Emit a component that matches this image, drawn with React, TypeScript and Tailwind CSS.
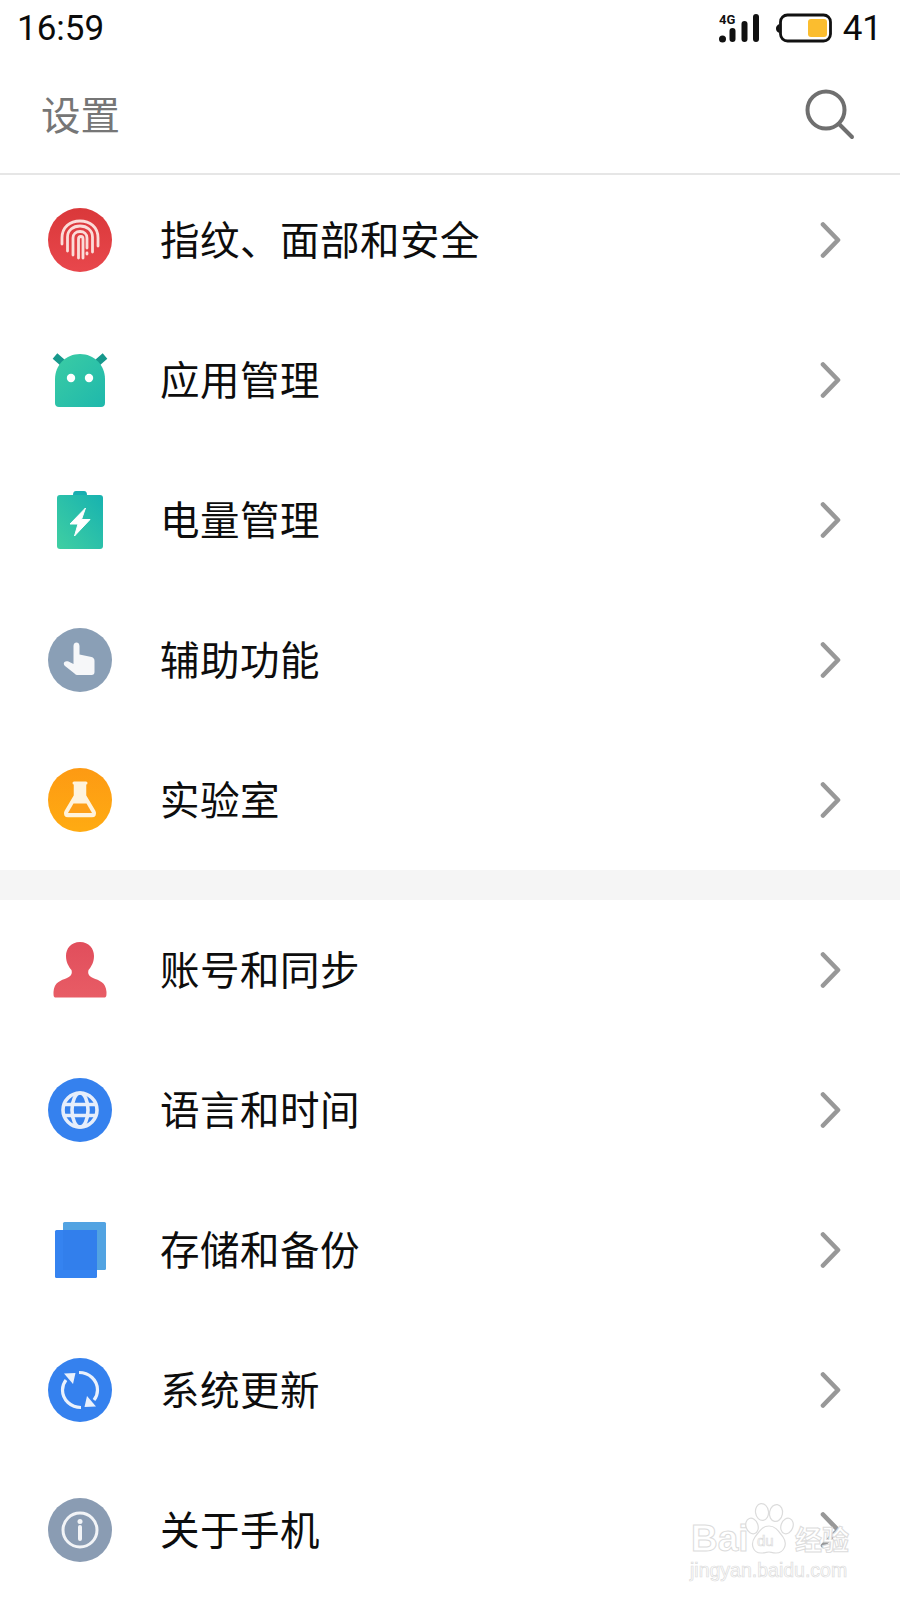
function Chevron() {
  return (
    <svg width="22" height="36" viewBox="0 0 22 36" fill="none" className="shrink-0">
      <path d="M3 2.500 18 18 3 33.500" stroke="#989898" strokeWidth="4.600" strokeLinecap="round" strokeLinejoin="round" />
    </svg>
  );
}

function FingerprintIcon() {
  return (
    <svg width="64" height="64" viewBox="0 0 64 64" fill="none">
      <defs>
        <linearGradient id="finger" x1="0" y1="0" x2="0" y2="1">
          <stop offset="0" stopColor="#da383a" />
          <stop offset="1" stopColor="#e8474c" />
        </linearGradient>
      </defs>
      <circle cx="32" cy="32" r="32" fill="url(#finger)" />
      <g stroke="#fbdcd8" strokeWidth="2.800" strokeLinecap="round">
        <path d="M14 36V30C14 19 22 13 32 13C42 13 50 19 50 30V38" />
        <path d="M19.500 43V29C19.500 22.500 25 18 32 18C39 18 44.500 22.500 44.500 29V44" />
        <path d="M25 47V30C25 26 28 23.500 32 23.500C36 23.500 39 26 39 30V40" />
        <path d="M30.500 50V31C30.500 29 32 28.500 33 28.500C34 28.500 35 29.500 35 31V50" />
        <path d="M39 45V46" />
      </g>
    </svg>
  );
}

function RobotIcon() {
  return (
    <svg width="64" height="64" viewBox="0 0 64 64" fill="none">
      <defs>
        <linearGradient id="robot" x1="0" y1="0" x2="1" y2="1">
          <stop offset="0" stopColor="#3bcca4" />
          <stop offset="1" stopColor="#1fb8ac" />
        </linearGradient>
      </defs>
      <path d="M7 8 15 15M57 8 49 15" stroke="#16988c" strokeWidth="7" />
      <path d="M7 31C7 17 18 6 32 6C46 6 57 17 57 31V55C57 57.500 55.500 59 53 59H11C8.500 59 7 57.500 7 55Z" fill="url(#robot)" />
      <circle cx="23" cy="30" r="4.200" fill="#fff" />
      <circle cx="41" cy="30" r="4.200" fill="#fff" />
    </svg>
  );
}

function BatteryIcon() {
  return (
    <svg width="64" height="64" viewBox="0 0 64 64" fill="none">
      <defs>
        <linearGradient id="charge" x1="1" y1="0" x2="0" y2="1">
          <stop offset="0" stopColor="#17b2b0" />
          <stop offset="1" stopColor="#40cfa2" />
        </linearGradient>
      </defs>
      <path d="M25 7C25 4.500 26 3 28 3H36C38 3 39 4.500 39 7Z" fill="#17aeb0" />
      <rect x="9" y="7" width="46" height="54" rx="3" fill="url(#charge)" />
      <path d="M37.500 20 22 36H30L26.500 48 42 31.500H33.500Z" fill="#fff" stroke="#fff" strokeLinejoin="round" />
    </svg>
  );
}

function HandIcon() {
  return (
    <svg width="64" height="64" viewBox="0 0 64 64" fill="none">
      <circle cx="32" cy="32" r="32" fill="#8a9fb6" />
      <path d="M25.500 18C25.500 15.500 27 14.500 28.500 14.500C30 14.500 31.500 15.500 31.500 18V26.500L43.500 29C45.500 29.500 46.500 31 46.500 33V44C46.500 46 45.500 47 43.500 47H30C28.500 47 27.500 46.500 26.500 45.500L17 38C15.500 36.500 15.500 35 16.500 34C17.500 33 19 33 20.500 33.500L25.500 36Z" fill="#f6f7f9" />
    </svg>
  );
}

function FlaskIcon() {
  return (
    <svg width="64" height="64" viewBox="0 0 64 64" fill="none">
      <defs>
        <linearGradient id="lab" x1="0" y1="0" x2="0" y2="1">
          <stop offset="0" stopColor="#fd9a13" />
          <stop offset="1" stopColor="#ffab12" />
        </linearGradient>
      </defs>
      <circle cx="32" cy="32" r="32" fill="url(#lab)" />
      <path d="M26 15H38" stroke="#fff3dc" strokeWidth="3" strokeLinecap="round" />
      <path d="M27.500 16V28L18 44C17 46 18 47.500 20 47.500H44C46 47.500 47 46 46 44L36.500 28V16" fill="#fff3dc" stroke="#fff3dc" strokeWidth="3.500" strokeLinejoin="round" />
      <path d="M25.500 35.500H38.500L44 45H20Z" fill="#fd9f18" />
    </svg>
  );
}

function PersonIcon() {
  return (
    <svg width="64" height="64" viewBox="0 0 64 64" fill="none">
      <defs>
        <linearGradient id="person" x1="0" y1="0" x2="0" y2="1">
          <stop offset="0" stopColor="#e14e5c" />
          <stop offset="1" stopColor="#e85c65" />
        </linearGradient>
      </defs>
      <path d="M32 4C23 4 18 10.500 18 18C18 24 20.500 28.500 23.500 32C24.500 36 23 38 19 40C13 42.500 6 44 5.500 54C5.500 58 5.500 59.500 8 59.500H56C58.500 59.500 58.500 58 58.500 54C58 44 51 42.500 45 40C41 38 39.500 36 40.500 32C43.500 28.500 46 24 46 18C46 10.500 41 4 32 4Z" fill="url(#person)" />
    </svg>
  );
}

function GlobeIcon() {
  return (
    <svg width="64" height="64" viewBox="0 0 64 64" fill="none">
      <circle cx="32" cy="32" r="32" fill="#3581ee" />
      <g stroke="#e6eefb" strokeWidth="3.600">
        <circle cx="32" cy="32" r="17" />
        <ellipse cx="32" cy="32" rx="8" ry="17" />
        <path d="M16.500 26.500H47.500M16.500 37.500H47.500" />
      </g>
    </svg>
  );
}

function StorageIcon() {
  return (
    <svg width="64" height="64" viewBox="0 0 64 64" fill="none">
      <rect x="15" y="4" width="43" height="48" rx="1.500" fill="#52a3e2" />
      <rect x="7" y="12" width="42" height="48" rx="1.500" fill="#3583f0" />
      <rect x="15" y="12" width="34" height="40" fill="#327fec" />
    </svg>
  );
}

function SyncIcon() {
  return (
    <svg width="64" height="64" viewBox="0 0 64 64" fill="none">
      <circle cx="32" cy="32" r="32" fill="#3581ee" />
      <g stroke="#eaf1fc" strokeWidth="3.200" fill="none">
        <path d="M31 14.500C41 14.500 49.500 22 49.500 32C49.500 36 48 39.500 46 42" />
        <path d="M33 49.500C23 49.500 14.500 42 14.500 32C14.500 28 16 24.500 18 22" />
      </g>
      <path d="M16 15.500 27.500 15 25 26Z" fill="#eaf1fc" />
      <path d="M48 48.500 36.500 49 39 38Z" fill="#eaf1fc" />
    </svg>
  );
}

function InfoIcon() {
  return (
    <svg width="64" height="64" viewBox="0 0 64 64" fill="none">
      <circle cx="32" cy="32" r="32" fill="#8a9cb3" />
      <circle cx="32" cy="32" r="17" stroke="#f2f4f7" strokeWidth="3" />
      <circle cx="32" cy="23.500" r="2.500" fill="#f2f4f7" />
      <path d="M32 29V41" stroke="#f2f4f7" strokeWidth="4" strokeLinecap="round" />
    </svg>
  );
}

function SettingRow({ icon, label }: { icon: React.ReactNode; label: string }) {
  return (
    <div className="h-[140px] flex items-center pl-[48px] pr-[58px]">
      <div className="w-[64px] h-[64px] shrink-0">{icon}</div>
      <div className="ml-[48px] pb-[4px] flex-1 text-[39.500px] leading-none tracking-[0.5px] text-[#0d0d0d]">{label}</div>
      <Chevron />
    </div>
  );
}

function StatusBar() {
  return (
    <div className="h-[56px] flex items-center justify-between pl-[17px] pr-[18px] pt-[1px] font-['Roboto',sans-serif] text-[35px] leading-none text-[#0b0b0b]">
      <span>16:59</span>
      <div className="flex items-center">
        <svg width="40" height="32" viewBox="0 0 40 32" fill="none">
          <text x="0" y="11" fontFamily="Roboto, sans-serif" fontWeight="700" fontSize="13" fill="#111">4G</text>
          <circle cx="3.500" cy="26" r="3.500" fill="#111" />
          <rect x="10.500" y="15" width="6" height="14" rx="3" fill="#111" />
          <rect x="22.500" y="8" width="6" height="21" rx="3" fill="#111" />
          <rect x="34" y="1" width="6" height="28" rx="3" fill="#111" />
        </svg>
        <svg width="57" height="32" viewBox="0 0 57 32" fill="none" className="ml-[16px]">
          <path d="M4.500 11C2 12 1 13.500 1 15.500C1 17.500 2 19 4.500 20Z" fill="#111" />
          <rect x="5.500" y="2" width="50" height="26" rx="7" stroke="#111" strokeWidth="2.800" />
          <rect x="33" y="6" width="19" height="18" rx="3" fill="#fbbd2f" />
        </svg>
        <span className="ml-[11px]">41</span>
      </div>
    </div>
  );
}

function Watermark() {
  return (
    <div className="absolute left-[688px] top-[1500px] w-[170px] h-[80px] font-['Liberation_Sans',sans-serif] text-white">
      <div className="absolute left-[3px] top-[20px] text-[37px] leading-none font-bold [-webkit-text-stroke:1px_#dcdcdc]">Bai</div>
      <svg width="52" height="54" viewBox="0 0 52 54" fill="#fff" stroke="#dcdcdc" strokeWidth="1.200" className="absolute left-[55px] top-[2px]">
        <ellipse cx="9" cy="24" rx="6" ry="8" transform="rotate(-20 9 24)" />
        <ellipse cx="19" cy="10" rx="6.500" ry="8.500" transform="rotate(-8 19 10)" />
        <ellipse cx="33" cy="11" rx="6.500" ry="8.500" transform="rotate(10 33 11)" />
        <ellipse cx="44" cy="24" rx="6" ry="8" transform="rotate(20 44 24)" />
        <path d="M26 24C33 24 36 30 40 35C45 42 41 51 33 51C29 51 28 50 26 50C24 50 22 51 18 51C10 51 7 42 12 35C16 30 19 24 26 24Z" />
        <text x="14" y="44" fontFamily="Liberation Sans, sans-serif" fontSize="15" fontWeight="400" stroke="#dcdcdc" strokeWidth="0.700" fill="#fff">du</text>
      </svg>
      <div className="absolute left-[107px] top-[25px] text-[27px] leading-none whitespace-nowrap font-['Noto_Sans_CJK_SC',sans-serif] font-bold [-webkit-text-stroke:1px_#dcdcdc]">经验</div>
      <div className="absolute left-[2px] top-[61px] text-[19.500px] leading-none whitespace-nowrap [-webkit-text-stroke:0.7px_#dcdcdc]">jingyan.baidu.com</div>
    </div>
  );
}

const firstGroup = [
  { label: "指纹、面部和安全", icon: <FingerprintIcon /> },
  { label: "应用管理", icon: <RobotIcon /> },
  { label: "电量管理", icon: <BatteryIcon /> },
  { label: "辅助功能", icon: <HandIcon /> },
  { label: "实验室", icon: <FlaskIcon /> },
];

const secondGroup = [
  { label: "账号和同步", icon: <PersonIcon /> },
  { label: "语言和时间", icon: <GlobeIcon /> },
  { label: "存储和备份", icon: <StorageIcon /> },
  { label: "系统更新", icon: <SyncIcon /> },
  { label: "关于手机", icon: <InfoIcon /> },
];

export default function App() {
  return (
    <div className="relative w-[900px] h-[1600px] overflow-hidden bg-white font-['Noto_Sans_CJK_SC',sans-serif]">
      <StatusBar />

      {/* Header */}
      <div className="h-[119px] flex items-center justify-between pl-[41px] pr-[45px] border-b-2 border-[#e6e6e6]">
        <span className="text-[39.500px] leading-none text-[#767676] pb-[4px]">设置</span>
        <svg width="52" height="52" viewBox="0 0 52 52" fill="none">
          <circle cx="23" cy="21" r="18.500" stroke="#6f6f6f" strokeWidth="4" />
          <path d="M36 35 49 48" stroke="#6f6f6f" strokeWidth="4" strokeLinecap="round" />
        </svg>
      </div>

      <div className="-mt-[5px]">
        {firstGroup.map((row) => (
          <SettingRow key={row.label} icon={row.icon} label={row.label} />
        ))}
      </div>

      <div className="h-[30px] bg-[#f5f5f5]" />

      <div>
        {secondGroup.map((row) => (
          <SettingRow key={row.label} icon={row.icon} label={row.label} />
        ))}
      </div>

      <Watermark />
    </div>
  );
}
